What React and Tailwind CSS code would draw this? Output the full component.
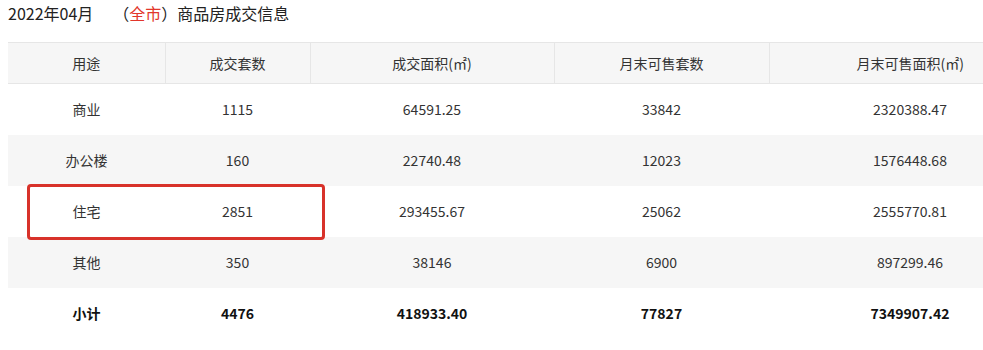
import React from 'react';

const rows = [
    { use: '商业', count: '1115', area: '64591.25', left: '33842', leftArea: '2320388.47' },
    { use: '办公楼', count: '160', area: '22740.48', left: '12023', leftArea: '1576448.68' },
    { use: '住宅', count: '2851', area: '293455.67', left: '25062', leftArea: '2555770.81', mark: true },
    { use: '其他', count: '350', area: '38146', left: '6900', leftArea: '897299.46' },
];

const cols = ['w-[157px]', 'w-[145px]', 'w-[244px]', 'w-[215px]', 'w-[282px]'];

const App = () => {
    return (
        <div className="w-[983px] h-[350px] overflow-hidden bg-white text-[#333] font-['Microsoft_YaHei','Noto_Sans_CJK_SC',sans-serif]">
            <div className="h-[42px] pl-2 pt-[1px] text-[16px] leading-[24px] text-[#222]">
                2022年04月
                <span className="ml-5">（<span className="text-[#e2362b]">全市</span>）</span>
                商品房成交信息
            </div>
            <div className="relative ml-2 w-[1043px]">
                <table className="table-fixed w-full border-collapse text-[14px] text-center">
                    <colgroup>
                        {cols.map((c, i) => <col key={i} className={c} />)}
                    </colgroup>
                    <thead>
                        <tr className="h-[41px] bg-[#f6f6f6] border-y border-[#e6e6e6]">
                            <th className="font-normal">用途</th>
                            <th className="font-normal border-l border-[#e6e6e6]">成交套数</th>
                            <th className="font-normal border-l border-[#e6e6e6]">成交面积(㎡)</th>
                            <th className="font-normal border-l border-[#e6e6e6]">月末可售套数</th>
                            <th className="font-normal border-l border-[#e6e6e6]">月末可售面积(㎡)</th>
                        </tr>
                    </thead>
                    <tbody>
                        {rows.map((r, i) => (
                            <tr key={i} className={`h-[51px] ${i % 2 === 1 ? 'bg-[#f6f6f6]' : 'bg-white'}`}>
                                <td>{r.use}</td>
                                <td>{r.count}</td>
                                <td>{r.area}</td>
                                <td>{r.left}</td>
                                <td>{r.leftArea}</td>
                            </tr>
                        ))}
                        <tr className="h-[51px] font-bold text-[#111]">
                            <td>小计</td>
                            <td>4476</td>
                            <td>418933.40</td>
                            <td>77827</td>
                            <td>7349907.42</td>
                        </tr>
                    </tbody>
                </table>
                {/* red highlight around 住宅 row */}
                <div className="absolute left-[19px] top-[142px] w-[298px] h-[56px] border-[3px] border-[#d8322a] rounded-[4px]"></div>
            </div>
        </div>
    );
};

export default App;
